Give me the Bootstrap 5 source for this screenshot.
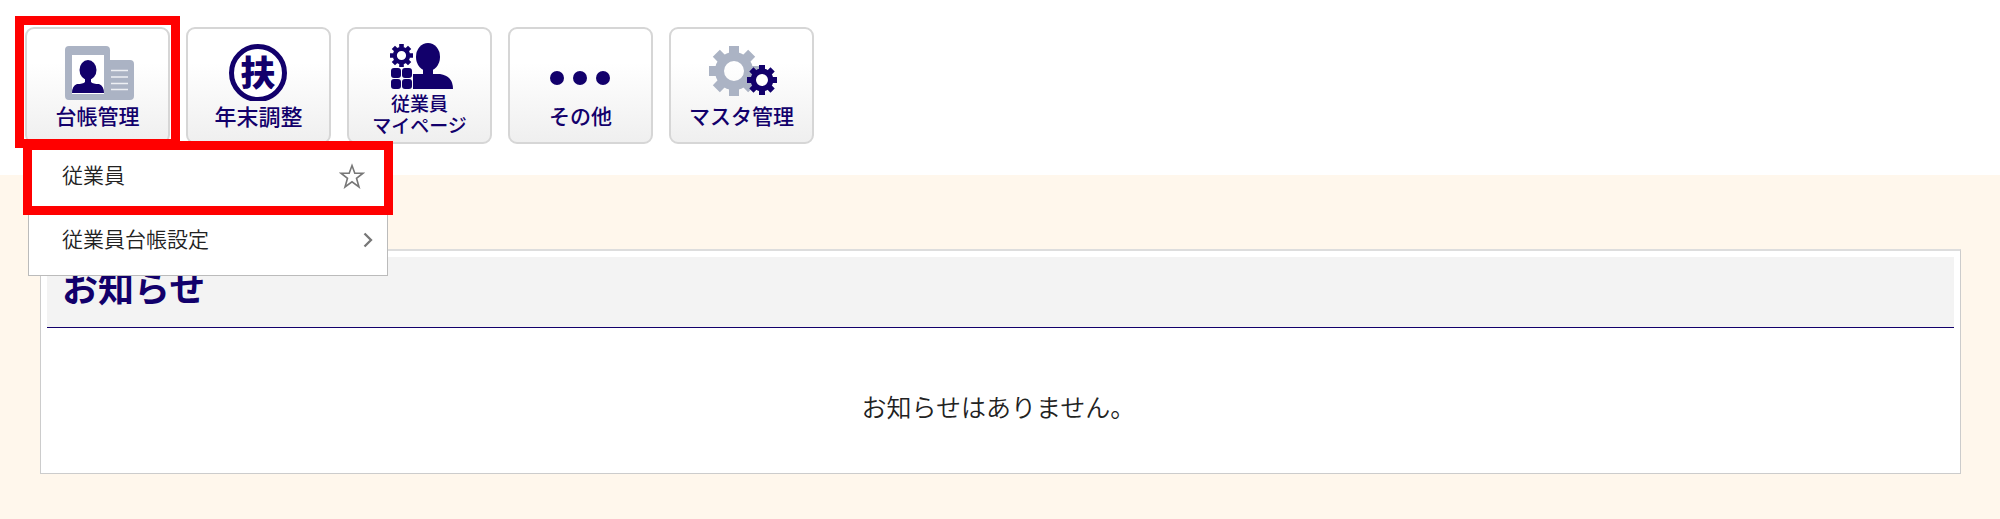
<!DOCTYPE html>
<html lang="ja">
<head>
<meta charset="utf-8">
<meta name="viewport" content="width=device-width, initial-scale=1">
<title>お知らせ</title>
<link href="https://cdn.jsdelivr.net/npm/bootstrap@5.3.0/dist/css/bootstrap.min.css" rel="stylesheet">
<style>
  :root { --navy: #12006b; --steel: #abb3c4; }
  body { background: #fff7ec; color: #333; font-family: "Noto Sans CJK JP", sans-serif; }
  .app-header { padding: 27px 25px 31px; }
  .app-menu { gap: 16px; }
  .app-tile {
    width: 145px; height: 117px; padding: 14px 0 0;
    border: 2px solid #d6d6d6; border-radius: 9px;
    background: linear-gradient(#fff 30%, #efefef);
    color: var(--navy); font-size: 21px; font-weight: 500; line-height: 28px;
  }
  .app-tile svg { width: 80px; height: 58px; }
  .app-tile.two-line { font-size: 19px; line-height: 22px; }
  .app-tile.two-line svg { height: 49px; }
  .app-tile.strong { font-size: 22px; }
  .marked::after { content: ""; position: absolute; border: 9px solid #f00; pointer-events: none; }
  .tile-slot.marked::after { inset: -11px -10px -4px -10px; z-index: 1001; }
  .sub-menu {
    top: 115px; left: 3px; width: 360px; padding: 0 0 4px;
    border: 1px solid #bbb; border-radius: 0; background: #fff;
  }
  .sub-row { height: 64px; padding: 0 14px 0 33px; }
  .sub-row a { padding-bottom: 2px; color: #222; font-size: 21px; font-weight: 350; line-height: 32px; }
  .sub-row svg { margin-top: 2px; }
  .sub-row.marked::after { inset: -2px -6px -8px -6px; z-index: 1002; }
  .sub-row button { margin-right: 8px; }
  .app-main { padding: 74px 39px 45px 40px; }
  .notice { padding: 6px; border: 1px solid #ccc; border-top: 2px solid #ddd; background: #fff; }
  .notice-title {
    height: 71px; padding: 8px 15px; background: #f3f3f3; border-bottom: 1px solid var(--navy);
    color: var(--navy); font-size: 36px; font-weight: 700; line-height: 42px;
  }
  .notice-text { padding: 58px 4px 41px 0; color: #222; font-size: 25px; font-weight: 350; line-height: 40px; }
</style>
</head>
<body>
<svg class="d-none" aria-hidden="true">
  <symbol id="cog" viewBox="-25 -25 50 50">
    <circle r="14.500" fill="none" stroke="currentColor" stroke-width="9"/>
    <g fill="currentColor">
      <path id="teeth" d="M-5-25H5V-17H-5ZM-5 17H5V25H-5Z"/>
      <use href="#teeth" transform="rotate(45)"/>
      <use href="#teeth" transform="rotate(90)"/>
      <use href="#teeth" transform="rotate(135)"/>
    </g>
  </symbol>
</svg>

<header class="app-header bg-white">
  <nav>
    <ul class="app-menu d-flex list-unstyled mb-0">
      <li class="tile-slot marked position-relative">
        <button type="button" class="app-tile d-flex flex-column align-items-center" aria-expanded="true">
          <svg viewBox="0 0 80 58" aria-hidden="true">
            <path fill="#abb3c4" d="M11 3H48Q52 3 52 7V17H72Q76 17 76 21V53Q76 57 72 57H11Q7 57 7 53V7Q7 3 11 3Z"/>
            <path fill="#fff" d="M14 12H46V51H14Z"/>
            <ellipse cx="30" cy="27" rx="8.500" ry="10" fill="#12006b"/>
            <path fill="#12006b" d="M27 34H33V39Q35 41 41 41Q46 43 46 50H14Q14 43 19 41Q25 41 27 39Z"/>
            <path stroke="#eef0f4" stroke-width="1.500" d="M53 27.500H70M53 34H70M53 40.500H70M53 46.500H70"/>
          </svg>
          <span>台帳管理</span>
        </button>
        <ul class="sub-menu dropdown-menu show">
          <li class="sub-row marked position-relative d-flex align-items-center justify-content-between">
            <a href="#" class="text-decoration-none">従業員</a>
            <button type="button" class="btn p-0 border-0 d-flex" aria-label="お気に入り">
              <svg width="26" height="26" viewBox="0 0 26 26" fill="none" stroke="#777" stroke-width="1.600" aria-hidden="true">
                <path d="M13 2.500L15.800 10.200H24L17.500 15.300L20 24L13 18.800L6 24L8.500 15.300L2 10.200H10.200Z"/>
              </svg>
            </button>
          </li>
          <li class="sub-row d-flex align-items-center justify-content-between">
            <a href="#" class="text-decoration-none">従業員台帳設定</a>
            <svg width="10" height="16" viewBox="0 0 10 16" fill="none" stroke="#777" stroke-width="2.300" aria-hidden="true"><path d="M1.500 1.500L8 8L1.500 14.500"/></svg>
          </li>
        </ul>
      </li>
      <li>
        <button type="button" class="app-tile strong d-flex flex-column align-items-center">
          <svg viewBox="0 0 80 58" aria-hidden="true">
            <circle cx="39" cy="30" r="26.500" fill="#fff" stroke="#12006b" stroke-width="5"/>
            <text x="39" y="43" text-anchor="middle" font-size="35" font-weight="900" fill="#12006b">扶</text>
          </svg>
          <span>年末調整</span>
        </button>
      </li>
      <li>
        <button type="button" class="app-tile two-line d-flex flex-column align-items-center">
          <svg viewBox="0 0 80 49" fill="#12006b" color="#12006b" aria-hidden="true">
            <use href="#cog" x="10" y="1" width="23" height="23"/>
            <rect x="11" y="25" width="10" height="10" rx="3"/><rect x="22" y="25" width="10" height="10" rx="3"/>
            <rect x="11" y="36" width="10" height="10" rx="3"/><rect x="22" y="36" width="10" height="10" rx="3"/>
            <ellipse cx="48" cy="14" rx="12" ry="14"/>
            <path d="M43 24H53V31H60Q73 33 73 46H33V31H43Z"/>
          </svg>
          <span>従業員</span>
          <span>マイページ</span>
        </button>
      </li>
      <li>
        <button type="button" class="app-tile d-flex flex-column align-items-center">
          <svg viewBox="0 0 80 58" fill="#12006b" aria-hidden="true"><circle cx="16" cy="35" r="7"/><circle cx="39" cy="35" r="7"/><circle cx="62" cy="35" r="7"/></svg>
          <span>その他</span>
        </button>
      </li>
      <li>
        <button type="button" class="app-tile d-flex flex-column align-items-center">
          <svg viewBox="0 0 80 58" aria-hidden="true">
            <use href="#cog" color="#abb3c4" x="7" y="3" width="50" height="50"/>
            <circle cx="60" cy="37" r="8" fill="#fff"/>
            <use href="#cog" color="#12006b" x="45" y="22" width="30" height="30"/>
          </svg>
          <span>マスタ管理</span>
        </button>
      </li>
    </ul>
  </nav>
</header>

<main class="app-main">
  <section class="notice">
    <h1 class="notice-title mb-0">お知らせ</h1>
    <p class="notice-text text-center mb-0">お知らせはありません。</p>
  </section>
</main>
<script src="https://cdn.jsdelivr.net/npm/bootstrap@5.3.0/dist/js/bootstrap.bundle.min.js"></script>
</body>
</html>
